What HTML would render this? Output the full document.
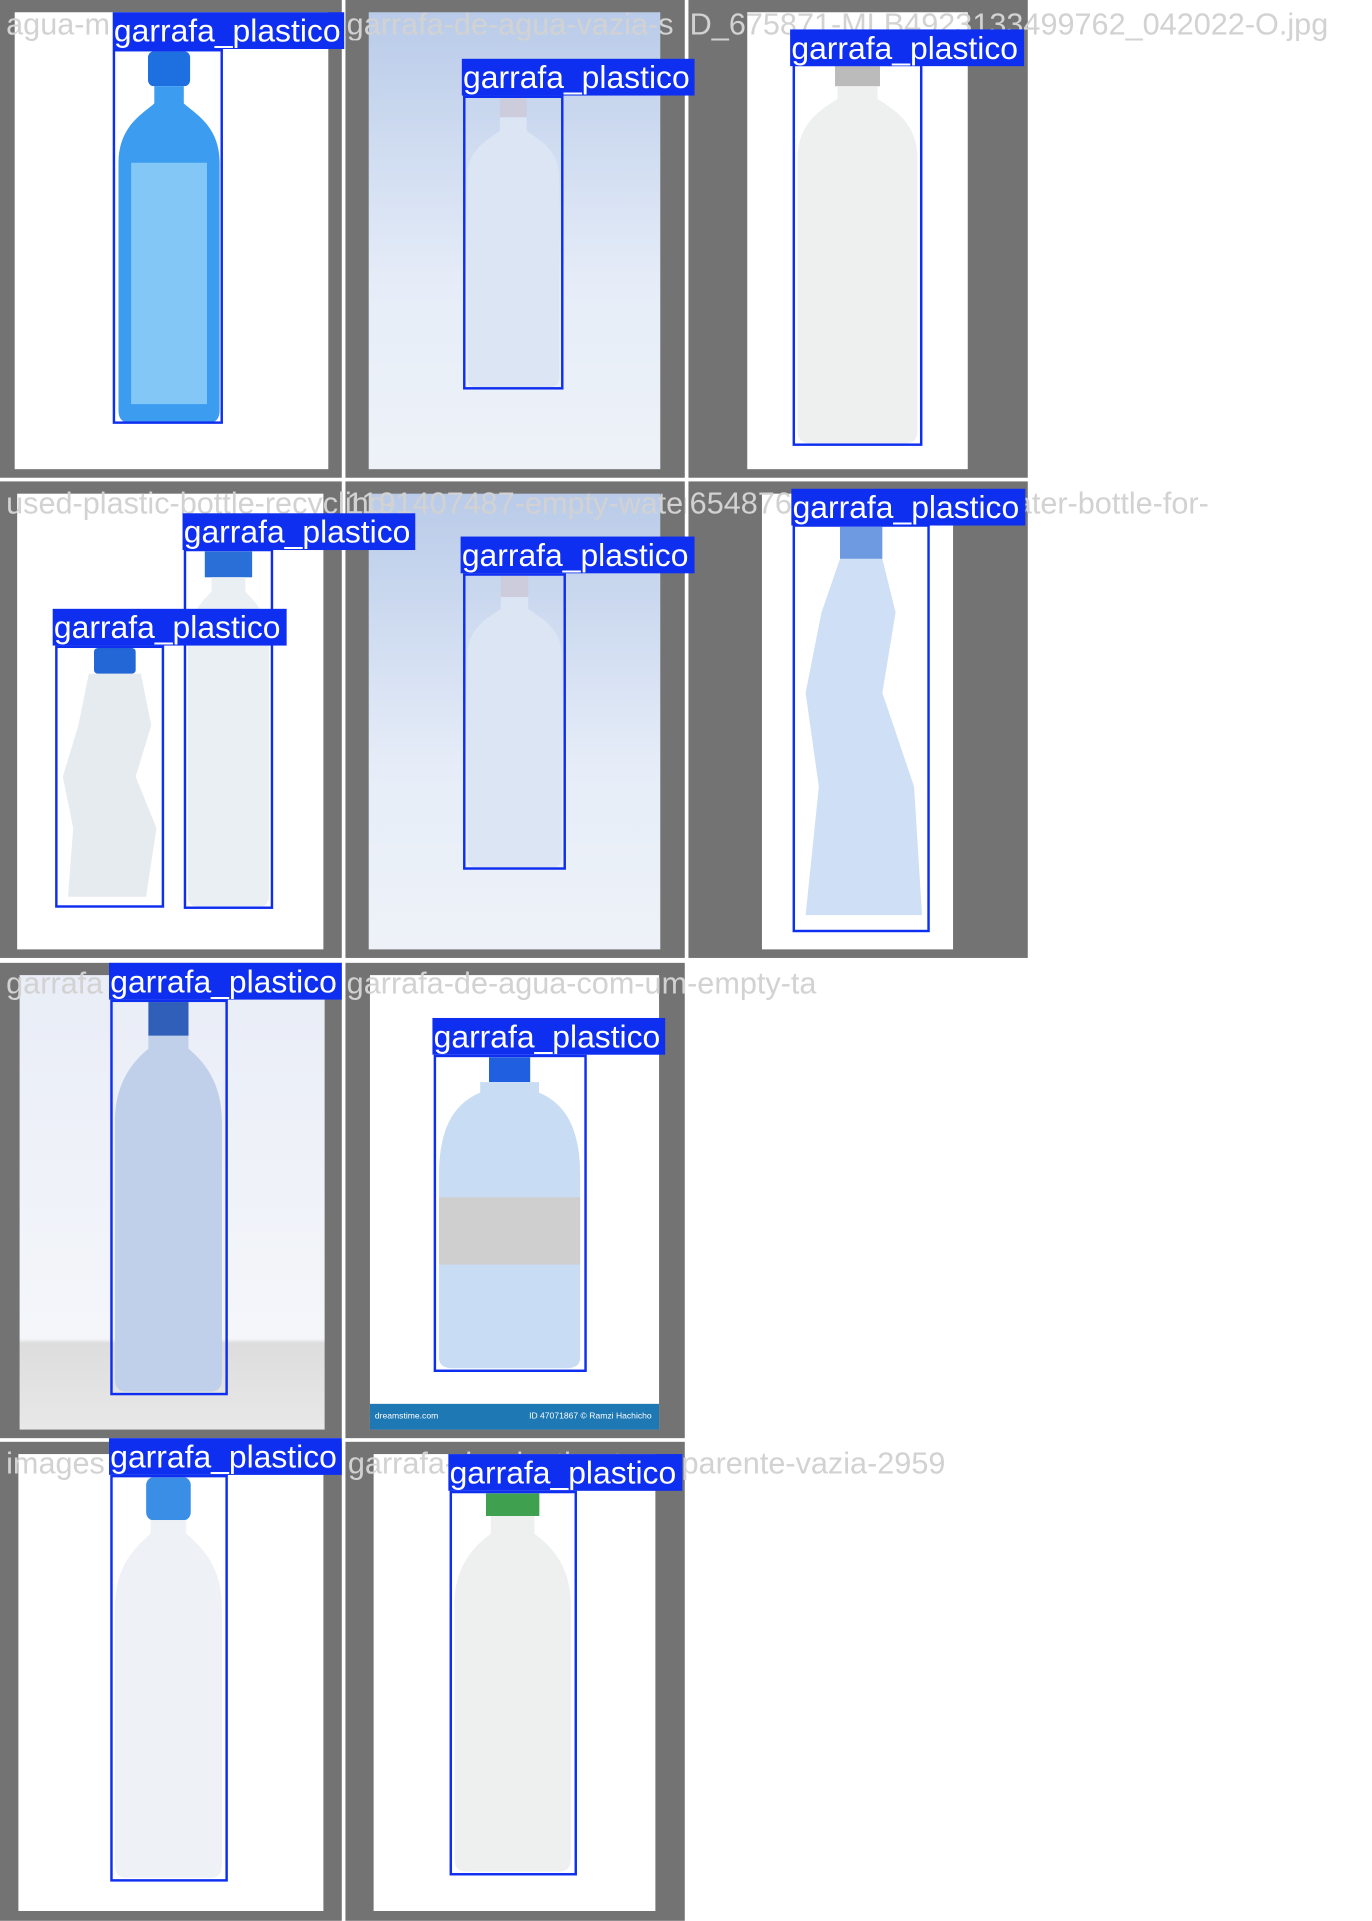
<!DOCTYPE html>
<html><head><meta charset="utf-8"><style>
html,body{margin:0;padding:0;background:#fff;width:1372px;height:1920px;overflow:hidden}
#w{position:absolute;left:0;top:0;width:1120px;height:1568px;transform:scale(1.225);transform-origin:0 0;font-family:"Liberation Sans",Arial,sans-serif}
.a{position:absolute}
.g{position:absolute;background:#737373}
.box{position:absolute;border:2px solid #0f2ff0;box-sizing:border-box}
.lb{position:absolute;background:#0f2ff0;color:#fff;font-size:26px;line-height:30px;height:30px;padding-left:1px;white-space:nowrap;overflow:hidden}
.t{position:absolute;color:#d2d2d2;font-size:25px;line-height:26px;white-space:nowrap}
svg.b{position:absolute}
</style></head><body><div id="w">
<div class="g" style="left:0;top:0;width:279px;height:390px"></div>
<div class="g" style="left:282px;top:0;width:277px;height:390px"></div>
<div class="g" style="left:562px;top:0;width:277px;height:390px"></div>
<div class="g" style="left:0;top:393px;width:279px;height:389px"></div>
<div class="g" style="left:282px;top:393px;width:277px;height:389px"></div>
<div class="g" style="left:562px;top:393px;width:277px;height:389px"></div>
<div class="g" style="left:0;top:786px;width:279px;height:388px"></div>
<div class="g" style="left:282px;top:786px;width:277px;height:388px"></div>
<div class="g" style="left:0;top:1177px;width:279px;height:391px"></div>
<div class="g" style="left:282px;top:1177px;width:277px;height:391px"></div>
<div class="a" style="left:12px;top:10px;width:256px;height:373px;background:#fff"></div>
<div class="a" style="left:301px;top:10px;width:238px;height:373px;background:linear-gradient(#b9cbe9,#e6edf8 60%,#eef2f8)"></div>
<div class="a" style="left:610px;top:10px;width:180px;height:373px;background:#fff"></div>
<div class="a" style="left:14px;top:403px;width:250px;height:372px;background:#fff"></div>
<div class="a" style="left:301px;top:403px;width:238px;height:372px;background:linear-gradient(#b9cbe9,#e6edf8 60%,#eef2f8)"></div>
<div class="a" style="left:622px;top:403px;width:156px;height:372px;background:#fff"></div>
<div class="a" style="left:16px;top:796px;width:249px;height:371px;background:linear-gradient(#e9edf7,#f4f6fa 80%,#ddd 81%,#e8e8e8)"></div>
<div class="a" style="left:302px;top:796px;width:236px;height:371px;background:#fff"></div>
<div class="a" style="left:302px;top:1146px;width:236px;height:21px;background:#1e78b4;color:#fff;font-size:7px;line-height:21px"><span style="margin-left:4px">dreamstime.com</span><span style="float:right;margin-right:6px">ID 47071867 © Ramzi Hachicho</span></div>
<div class="a" style="left:15px;top:1187px;width:249px;height:373px;background:#fff"></div>
<div class="a" style="left:305px;top:1187px;width:230px;height:373px;background:#fff"></div>

<svg class="b" style="left:95px;top:42px" width="86" height="303" viewBox="0 0 100 300" preserveAspectRatio="none"><rect x="30" y="0" width="40" height="28" rx="5" fill="#1e6fe0"/><path d="M36 28h28v14c10 8 34 18 34 48v200q0 10-10 10h-76q-10 0-10-10v-200c0-30 24-40 34-48z" fill="#3c9cf0"/><path d="M14 90h72v195H14z" fill="#9fdaf8" opacity=".7"/></svg>
<svg class="b" style="left:380px;top:80px" width="78" height="236" viewBox="0 0 100 300" preserveAspectRatio="none"><rect x="36" y="0" width="28" height="20" fill="#ccd"/><path d="M36 20h28v14c10 8 34 18 34 48v208q0 10-10 10h-76q-10 0-10-10v-208c0-30 24-40 34-48z" fill="#dbe5f3"/></svg>
<svg class="b" style="left:649px;top:54px" width="102" height="308" viewBox="0 0 100 300" preserveAspectRatio="none"><rect x="32" y="0" width="36" height="16" fill="#bbb"/><path d="M34 16h32v10c12 8 32 18 32 48v216q0 10-10 10h-76q-10 0-10-10v-216c0-30 20-40 32-48z" fill="#eef0f0"/></svg>
<svg class="b" style="left:152px;top:450px" width="69" height="290" viewBox="0 0 100 300" preserveAspectRatio="none"><rect x="22" y="0" width="56" height="22" fill="#2a6fd8"/><path d="M30 22h40v12c10 8 28 18 28 48v208q0 10-10 10h-76q-10 0-10-10v-208c0-30 18-40 28-48z" fill="#eaeff3"/></svg>
<svg class="b" style="left:47px;top:529px" width="85" height="210" viewBox="0 0 100 300" preserveAspectRatio="none"><rect x="35" y="0" width="40" height="30" rx="4" fill="#2366d6"/><path d="M30 30h50l10 60-15 60 20 60-10 80H10l5-80 -10-60 15-60z" fill="#e6ebf0"/></svg>
<svg class="b" style="left:380px;top:470px" width="80" height="238" viewBox="0 0 100 300" preserveAspectRatio="none"><rect x="36" y="0" width="28" height="22" fill="#ccd"/><path d="M36 22h28v12c10 8 34 18 34 48v208q0 10-10 10h-76q-10 0-10-10v-208c0-30 24-40 34-48z" fill="#dbe5f3"/></svg>
<svg class="b" style="left:649px;top:430px" width="108" height="328" viewBox="0 0 100 300" preserveAspectRatio="none"><rect x="34" y="0" width="32" height="24" fill="#6d9ae0"/><path d="M34 24h32l10 40 -10 60 24 70 6 96H8l10-96 -10-70 12-60z" fill="#cfdff5"/></svg>
<svg class="b" style="left:92px;top:818px" width="91" height="318" viewBox="0 0 100 300" preserveAspectRatio="none"><rect x="32" y="0" width="36" height="26" fill="#2f5fb8"/><path d="M32 26h36v10c14 10 30 26 30 56v198q0 10-10 10h-76q-10 0-10-10v-198c0-30 16-46 30-56z" fill="#c0d0ea"/></svg>
<svg class="b" style="left:356px;top:863px" width="120" height="254" viewBox="0 0 100 300" preserveAspectRatio="none"><rect x="36" y="0" width="28" height="24" fill="#1f5fe0"/><path d="M30 24h40v10c16 10 28 30 28 80v176q0 10-10 10h-76q-10 0-10-10v-176c0-50 12-70 28-80z" fill="#c8dcf3"/><rect x="2" y="135" width="96" height="65" fill="#cfcfcf"/></svg>
<svg class="b" style="left:92px;top:1206px" width="91" height="327" viewBox="0 0 100 300" preserveAspectRatio="none"><rect x="30" y="0" width="40" height="32" rx="6" fill="#3a8ee6"/><path d="M34 32h32v10c12 10 32 22 32 56v192q0 10-10 10h-76q-10 0-10-10v-192c0-34 20-46 32-56z" fill="#eef2f6"/></svg>
<svg class="b" style="left:369px;top:1219px" width="99" height="309" viewBox="0 0 100 300" preserveAspectRatio="none"><rect x="28" y="0" width="44" height="18" fill="#3fa050"/><path d="M32 18h36v14c14 10 30 26 30 56v202q0 10-10 10h-76q-10 0-10-10v-202c0-30 16-46 30-56z" fill="#eef0ef"/></svg>

<div class="t" style="left:5px;top:7px">agua-m</div>
<div class="t" style="left:283px;top:7px;width:277px;overflow:hidden">garrafa-de-agua-vazia-s</div>
<div class="t" style="left:563px;top:7px">D_675871-MLB4923133499762_042022-O.jpg</div>
<div class="t" style="left:5px;top:398px">used-plastic-bottle-recycling-</div>
<div class="t" style="left:283px;top:398px;width:277px;overflow:hidden">1191407487-empty-water-bottle</div>
<div class="t" style="left:563px;top:398px">654876-empty-plastic-water-bottle-for-</div>
<div class="t" style="left:5px;top:790px">garrafa</div>
<div class="t" style="left:283px;top:790px">garrafa-de-agua-com-um-empty-ta</div>
<div class="t" style="left:5px;top:1182px">images</div>
<div class="t" style="left:284px;top:1182px">garrafa-de-plastico-transparente-vazia-2959</div>

<div class="box" style="left:92px;top:40px;width:90px;height:306px"></div>
<div class="lb" style="left:92px;top:10px;width:188px">garrafa_plastico</div>
<div class="box" style="left:378px;top:78px;width:82px;height:240px"></div>
<div class="lb" style="left:377px;top:48px;width:189px">garrafa_plastico</div>
<div class="box" style="left:647px;top:52px;width:106px;height:312px"></div>
<div class="lb" style="left:645px;top:24px;width:190px">garrafa_plastico</div>
<div class="box" style="left:150px;top:448px;width:73px;height:294px"></div>
<div class="lb" style="left:149px;top:419px;width:189px">garrafa_plastico</div>
<div class="box" style="left:45px;top:527px;width:89px;height:214px"></div>
<div class="lb" style="left:43px;top:497px;width:190px">garrafa_plastico</div>
<div class="box" style="left:378px;top:468px;width:84px;height:242px"></div>
<div class="lb" style="left:376px;top:438px;width:190px">garrafa_plastico</div>
<div class="box" style="left:647px;top:428px;width:112px;height:333px"></div>
<div class="lb" style="left:646px;top:399px;width:190px">garrafa_plastico</div>
<div class="box" style="left:90px;top:816px;width:96px;height:323px"></div>
<div class="lb" style="left:89px;top:786px;width:189px">garrafa_plastico</div>
<div class="box" style="left:354px;top:861px;width:125px;height:259px"></div>
<div class="lb" style="left:353px;top:831px;width:189px">garrafa_plastico</div>
<div class="box" style="left:90px;top:1204px;width:96px;height:332px"></div>
<div class="lb" style="left:89px;top:1174px;width:189px">garrafa_plastico</div>
<div class="box" style="left:367px;top:1217px;width:104px;height:314px"></div>
<div class="lb" style="left:366px;top:1187px;width:190px">garrafa_plastico</div>
</div></body></html>
